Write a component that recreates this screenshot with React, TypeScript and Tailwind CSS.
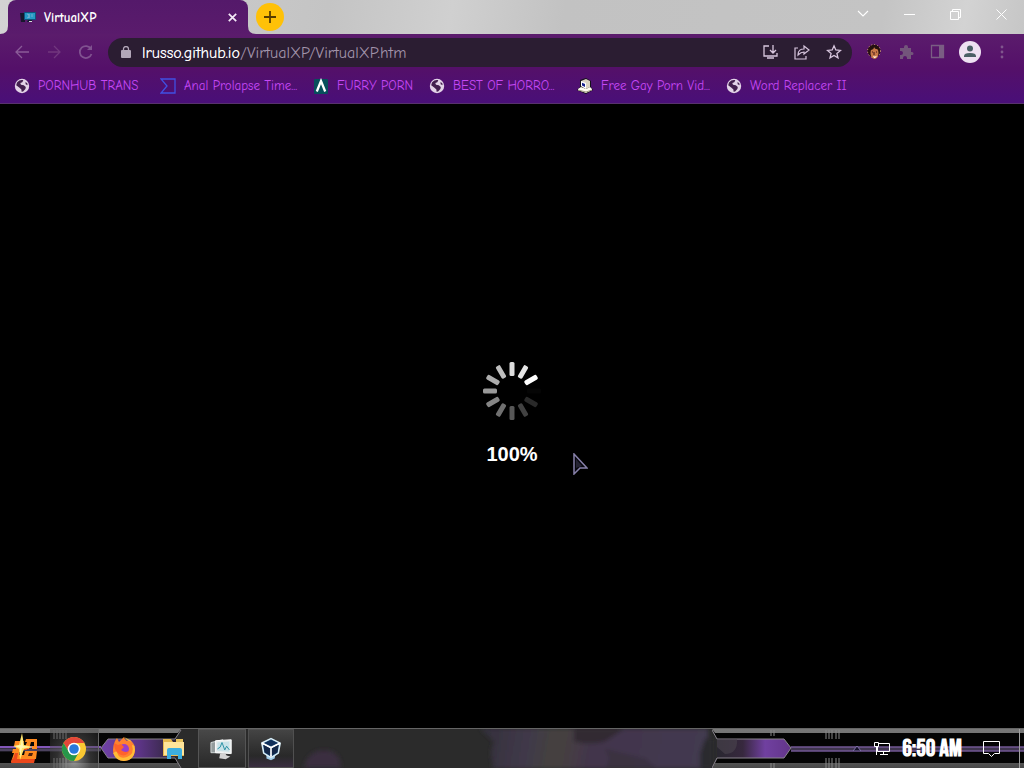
import React from "react";

const comic = "font-['Comic_Sans_MS','Comic_Neue','Open_Sans',sans-serif]";

function Globe() {
  return (
    <svg width="16" height="16" viewBox="0 0 16 16" aria-hidden="true">
      <circle cx="8" cy="8" r="7.2" fill="#e3d3e8" />
      <path d="M3 4.5c2-2.6 4.8-3 6.300-2.300L8.300 4.200l-2 .7.700 1.900 2.800.5 2 1.600-.4 2.200-2.300 2.400-1.500.2-.2-2.300L5.500 9.800 2.200 7.300zM11.500 4l1.800 1.300.3 2-2-1z" fill="#43204f" />
    </svg>
  );
}

function SigmaIcon() {
  return (
    <svg width="16" height="16" viewBox="0 0 16 16" fill="none" stroke="#4050e2" strokeWidth="1.3" aria-hidden="true">
      <path d="M1 1h14v14H1l6-7z" />
    </svg>
  );
}

function PeakIcon() {
  return (
    <svg width="16" height="16" viewBox="0 0 16 16" aria-hidden="true">
      <rect x="1" y="1" width="14" height="15" rx="1" fill="#074f5c" />
      <path d="M3.800 13.500 8 3l4.200 10.500" fill="none" stroke="#fff" strokeWidth="2.300" />
    </svg>
  );
}

function RetroComputer() {
  return (
    <svg width="16" height="16" viewBox="0 0 16 16" aria-hidden="true">
      <path d="m3 2 6-2 5 3v6l2 3-7 4-9-4 3-3z" fill="#15111a" />
      <path d="m4 3 5-2 4 2v6l-4 2-5-3z" fill="#d9d2c0" />
      <path d="m4 3 5 2v6L4 8z" fill="#fff" />
      <path d="m5 4.700 3 1.300v3L5 7.500z" fill="#16208c" />
      <path d="m1 11 3-2 5 2 4-2 2 2v1l-6 3-8-3z" fill="#fffdf0" />
      <path d="m1 12 8 2 6-2" fill="none" stroke="#a19a83" />
    </svg>
  );
}

function MonitorFavicon() {
  return (
    <svg width="16" height="12" viewBox="0 0 16 12" aria-hidden="true">
      <path d="M0 2h5v9H1z" fill="#17172d" />
      <path d="M4 1h12v8H4z" fill="#10547c" />
      <path d="M5 2h10v6H5z" fill="#2599c5" />
      <path d="m7 3 3 1-2 1 2 1-3 1M12 3v3" fill="none" stroke="#70b0cd" />
      <path d="M8 9h4v2H7z" fill="#111b32" /><path d="M9 10h3v1H9z" fill="#ddd" />
    </svg>
  );
}

const bookmarks = [
  { label: "PORNHUB TRANS", icon: <Globe />, width: "w-[146px]" },
  { label: "Anal Prolapse Time...", icon: <SigmaIcon />, width: "w-[153px]" },
  { label: "FURRY PORN", icon: <PeakIcon />, width: "w-[116px]" },
  { label: "BEST OF HORRO...", icon: <Globe />, width: "w-[148px]" },
  { label: "Free Gay Porn Vid...", icon: <RetroComputer />, width: "w-[149px]" },
  { label: "Word Replacer II", icon: <Globe />, width: "w-[140px]" },
];

function TitleBar() {
  return (
    <header className="flex h-[34px] bg-[linear-gradient(100deg,#d3d3d3_0%,#c4c4c4_32%,#d0d0d0_44%,#c2c2c2_55%,#c4c4c4_86%,#d3d3d3_94%,#c6c6c6_100%)]">
      <div className="flex w-64 shrink-0 items-end">
        <svg className="shrink-0" width="8" height="8" viewBox="0 0 8 8" aria-hidden="true"><path d="M8 0q0 8-8 8h8z" fill="#591b6b" /></svg>
        <div className="flex h-full min-w-0 flex-1 items-center rounded-t-lg bg-[linear-gradient(#54196a,#5a1b6c)] pr-2 pl-3">
          <MonitorFavicon />
          <h1 className={`ml-2 flex-1 pt-[2px] text-[13px] font-bold text-white ${comic}`}>VirtualXP</h1>
          <button aria-label="Close tab" className="grid size-4 place-items-center">
            <svg width="9" height="9" viewBox="0 0 9 9" stroke="#f4eaf7" strokeWidth="1.700"><path d="m.8.8 7.400 7.400M8.200.8.8 8.200" /></svg>
          </button>
        </div>
        <svg className="shrink-0" width="8" height="8" viewBox="0 0 8 8" aria-hidden="true"><path d="M0 0q0 8 8 8H0z" fill="#591b6b" /></svg>
      </div>
      <button aria-label="New tab" className="mt-[3px] grid size-7 place-items-center rounded-full bg-[#ffc107]">
        <svg width="14" height="14" viewBox="0 0 14 14" stroke="#573c00" strokeWidth="1.800"><path d="M7 1v12M1 7h12" /></svg>
      </button>
      <div className="ml-auto flex h-7 text-white">
        <button aria-label="Search tabs" className="grid w-[46px] place-items-center"><svg width="12" height="8" viewBox="0 0 12 8" fill="none" stroke="currentColor" strokeWidth="1.100"><path d="m1 1 5 5 5-5" /></svg></button>
        <button aria-label="Minimize" className="grid w-[46px] place-items-center"><svg width="11" height="3" stroke="currentColor"><path d="M0 1.500h11" /></svg></button>
        <button aria-label="Restore" className="grid w-[46px] place-items-center"><svg width="11" height="11" viewBox="0 0 11 11" fill="none" stroke="currentColor"><path d="M.5 2.500h8v8h-8zM2.500 2V.5h8v8H9" /></svg></button>
        <button aria-label="Close" className="grid w-[46px] place-items-center"><svg width="11" height="11" viewBox="0 0 11 11" stroke="currentColor"><path d="m.5.5 10 10m0-10-10 10" /></svg></button>
      </div>
    </header>
  );
}

function NavIcon({ name, children }: { name: string; children: React.ReactNode }) {
  return <button aria-label={name} className="grid size-8 shrink-0 place-items-center">{children}</button>;
}

function Toolbar() {
  const icon = { width: 16, height: 16, viewBox: "0 0 16 16", fill: "none", strokeWidth: 1.3 };
  return (
    <div className="flex h-9 items-center pr-[6px] pl-[6px]">
      <NavIcon name="Back"><svg {...icon} stroke="#8a5b98"><path d="M15 8H2m6-6L2 8l6 6" /></svg></NavIcon>
      <NavIcon name="Forward"><svg {...icon} stroke="#71377e"><path d="M2 8h12M8 2l6 6-6 6" /></svg></NavIcon>
      <NavIcon name="Reload"><svg {...icon} stroke="#805290" strokeWidth={1.8}><path d="M13 5a6 6 0 1 0 .5 5" /><path d="M14 1v5H9z" fill="#805290" stroke="none" /></svg></NavIcon>
      <div className="ml-[6px] flex h-[29px] min-w-0 flex-1 items-center rounded-full bg-[#2b1d32] pr-[2px] pl-[13px]">
        <svg width="10" height="13" viewBox="0 0 10 13" aria-hidden="true"><rect y="4" width="10" height="8" rx="1" fill="#b3a7b9" /><path d="M2.500 5V3a2.500 2.500 0 0 1 5 0v2" fill="none" stroke="#b3a7b9" strokeWidth="1.300" /></svg>
        <div className="relative ml-[11px] min-w-0 flex-1 pt-[2px]">
          <input aria-label="Address" className={`block h-6 w-full bg-transparent p-0 text-base leading-6 text-[#a294ab] outline-none ${comic}`} defaultValue="lrusso.github.io/VirtualXP/VirtualXP.htm" />
          <span aria-hidden="true" className={`pointer-events-none absolute top-[2px] left-0 text-base leading-6 text-white ${comic}`}>lrusso.github.io</span>
        </div>
        <NavIcon name="Install"><svg {...icon} stroke="#d8c6de"><path d="M7 2H2v10h13v-3M5 14h7M11 1v7M8 6l3 3 3-3" /></svg></NavIcon>
        <NavIcon name="Share"><svg {...icon} stroke="#d8c6de" strokeWidth={1.2}><path d="M4 4H1v11h11v-3M4 11c0-5 3-6 6-6V2l5 4-5 4V8c-3 0-4 1-6 3z" /></svg></NavIcon>
        <NavIcon name="Bookmark"><svg {...icon} stroke="#d8c6de"><path d="m8 1.800 1.800 4.200 4.700.4-3.600 3 1.100 4.500L8 11.500l-4 2.400 1.100-4.500-3.600-3L6.200 6z" /></svg></NavIcon>
      </div>
      <div className="ml-[6px] flex">
        <NavIcon name="Profile extension">
          <svg width="16" height="16" viewBox="0 0 16 16"><circle cx="8" cy="7" r="6.500" fill="#291211" stroke="#d99d80" strokeDasharray="1 2" /><ellipse cx="8.500" cy="9" rx="4" ry="6" fill="#c87948" /><path d="M4 6q4 0 4-3 1 3 5 2l-1-3-6-1z" fill="#24110f" /><path d="M6 8h1m3 0h1M8 8v3" stroke="#421719" /><path d="M7 12q2 1 4-.5-1 3-3 2.500z" fill="#fff2e0" /></svg>
        </NavIcon>
        <NavIcon name="Extensions"><svg width="16" height="16" viewBox="0 0 16 16" fill="#73557b"><path d="M2 4h4V3a2 2 0 0 1 4 0v1h3v4h1a1.500 1.500 0 0 1 0 3h-1v4H9v-1a2 2 0 0 0-4 0v1H2v-4h1a2 2 0 0 0 0-4H2z" /></svg></NavIcon>
        <NavIcon name="Side panel"><svg {...icon} stroke="#7a5d83"><path d="M1.500 1.500h12v12h-12z" /><path d="M9 2h5v12H9z" fill="#7a5d83" stroke="none" /></svg></NavIcon>
        <NavIcon name="Profile"><svg width="22" height="22" viewBox="0 0 22 22"><circle cx="11" cy="11" r="11" fill="#eee1f2" /><circle cx="11" cy="7.500" r="3" fill="#4b6066" /><path d="M5 16v-1q0-3 6-3t6 3v1z" fill="#4b6066" /></svg></NavIcon>
        <NavIcon name="Browser menu"><svg width="4" height="14" viewBox="0 0 4 14" fill="#80568d"><circle cx="2" cy="2" r="1.400" /><circle cx="2" cy="7" r="1.400" /><circle cx="2" cy="12" r="1.400" /></svg></NavIcon>
      </div>
    </div>
  );
}

function Spinner() {
  const colors = ["#ddd", "#e5e5e5", "#fff", "#050505", "#292929", "#424242", "#575757", "#707070", "#858585", "#999", "#adadad", "#bebebe"];
  return (
    <svg width="58" height="58" viewBox="0 0 58 58" role="img" aria-label="Loading">
      {colors.map((color, i) => <rect key={i} x="26.500" y="0" width="5" height="14" rx="1.500" fill={color} transform={`rotate(${i * 30} 29 29)`} />)}
    </svg>
  );
}

function LeftFrame() {
  return (
    <svg className="absolute top-0 left-0" width="200" height="40" viewBox="0 0 200 40" aria-hidden="true">
      <defs>
        <linearGradient id="edge" x2="0" y2="1"><stop stopColor="#777" /><stop offset=".6" stopColor="#6a6a6a" /><stop offset="1" stopColor="#454545" /></linearGradient>
        <linearGradient id="violet"><stop stopColor="#7042a7" /><stop offset=".5" stopColor="#5c3485" /><stop offset="1" stopColor="#292530" /></linearGradient>
      </defs>
      <path d="M0 0h181l-6 10v19l6 11H0z" fill="#050505" />
      <path d="m181 0-6 10 4 9-4 10 6 11h19V0z" fill="#2b2b2b" />
      <path d="M0 0h181l-3 4H0zM0 34h178l3 6H0z" fill="url(#edge)" />
      <path d="M54 1v9m3-9v9m3-9v9m3-9v9m3-9v9M54 29v10m3-10v10m3-10v10m3-10v10m3-10v10" stroke="#888" />
      <path d="M0 20h101" stroke="#373044" strokeWidth="5" /><path d="M0 18h101" stroke="#8256b8" strokeWidth="2" /><path d="M0 21h101" stroke="#605478" />
      <path d="m101 19 7-9h67l4 9-4 10h-67z" fill="url(#violet)" />
      <path d="m181 1-6 9h-67l-7 9 7 10h67l6 10" fill="none" stroke="#858087" />
    </svg>
  );
}

function RightFrame() {
  return (
    <svg className="absolute top-0 right-0" width="312" height="40" viewBox="0 0 312 40" aria-hidden="true">
      <defs><linearGradient id="violet-right"><stop stopColor="#292730" /><stop offset=".35" stopColor="#37283e" /><stop offset=".65" stopColor="#7040a0" /><stop offset="1" stopColor="#63358a" /></linearGradient></defs>
      <path d="m0 0 5 10v20L0 40h312V0z" fill="#040404" />
      <path d="M0 0h312v4H3zM3 34h309v6H0z" fill="url(#edge)" />
      <path d="M79 20h233" stroke="#40364f" strokeWidth="5" /><path d="M79 18h233M79 22h233" stroke="#8a68b7" />
      <path d="M5 10h67l7 9-7 10H5z" fill="url(#violet-right)" />
      <path d="m0 1 5 9h67l7 9-7 10H5l-5 10" fill="none" stroke="#8b858e" />
      <path d="M5 10h20q1 15-12 15l-8-7z" fill="#4b454e" opacity=".6" />
      <path d="M114 1v9m3-9v9m3-9v9m4-9v9m3-9v9M114 29v10m3-10v10m3-10v10m4-10v10m3-10v10M59 1v6m3-6v6M59 34v5m3-5v5" stroke="#888" />
      <path d="M307.500 0v40" stroke="#a0a0a0" />
    </svg>
  );
}

function Chrome() {
  return <svg width="24" height="24" viewBox="0 0 24 24"><circle cx="12" cy="12" r="12" fill="#fac832" /><path d="M1.600 6A12 12 0 0 1 22.400 6H12a6 6 0 0 0-5 9z" fill="#e3473a" /><path d="M1.600 6A12 12 0 0 0 12 24l5-9a6 6 0 0 1-10 0z" fill="#27964a" /><circle cx="12" cy="12" r="6.300" fill="#fff" /><circle cx="12" cy="12" r="4.800" fill="#2879dc" /></svg>;
}
function Firefox() {
  return <svg width="24" height="24" viewBox="0 0 24 24"><path d="M3 4 5 1l2 4q3-3 5-5 1 4 4 4l2-1q5 4 5 10a11 11 0 0 1-22 0Q1 8 3 4" fill="#ff812f" /><path d="m12 0 4 4q5-1 7 6-1-2-3-2 3 9-5 12Q6 23 5 14l-4 2q3 8 11 8 10 0 11-11Q23 7 18 3z" fill="#ffd13b" opacity=".75" /><circle cx="12" cy="12" r="5" fill="#993ec9" /><path d="m2 6 4 2 3-1 3 3-3 3q5 4 9 0-3 7-9 5Q2 15 2 6" fill="#ff622c" /></svg>;
}
function Folder() {
  return <svg width="24" height="24" viewBox="0 0 24 24"><path d="M1 2h8l2 3h11v14H1z" fill="#e5b94f" /><path d="M2 5h20v13H2z" fill="#ffe59a" /><path d="M14 2h7v3h-7z" fill="#e9c35d" /><path d="M5 22v-9q0-2 2-2h11q2 0 2 2v9h-4v-4H9v4z" fill="#3caee0" /></svg>;
}
function MonitorApp() {
  return <svg width="24" height="24" viewBox="0 0 26 26"><path d="m1 6 13-3v14H1z" fill="#949c9d" stroke="#d7dddd" /><path d="m6 4 17-1v15L6 17z" fill="#e8eeee" stroke="#fff" /><path d="m8 6 13-1v11L8 15z" fill="#c8e2e8" /><path d="m8 13 3-2 2-5 3 8 2-4 3 4" fill="none" stroke="#248da1" /><path d="m11 18 5-1 2 3 4 1-5 3-7-1z" fill="#d3d3d3" /></svg>;
}
function VirtualBox() {
  return <svg width="20" height="24" viewBox="0 0 22 25"><path d="m6 18 5-2 5 2-1 5-4 2-5-2z" fill="#9fcae7" /><path d="m1 6 10-5 10 5-2 11-8 5-8-5z" fill="#153e68" stroke="#d8edf7" strokeWidth="1.800" /><path d="m1 6 10 5 10-5M11 11v10" stroke="#fff" strokeWidth="2" fill="none" /><path d="m4 6 7-3 7 3-7 3z" fill="#102f5a" /><path d="m3 8 7 4v7l-6-3zM19 8l-7 4v7l6-3z" fill="#142747" /></svg>;
}
function StartLogo() {
  return (
    <svg width="28" height="32" viewBox="0 0 28 32">
      <path d="M4 8h9l-1 4H8v4h4l-1 3H8v3h15l-1 7H0l3-9H1l1-4h3v-3H3z" fill="#ff8a1f" />
      <path d="M15 6h11v10h-5v-3h2V9h-3l-2 7h-5l3-7h-2zM14 18h12l-1 8H12z" fill="#ff8a1f" />
      <path d="m18 20-1 3h4l1-3z" fill="#51220b" />
      <path d="M1 26h23l-1 4H0zM13 14h4l-1 3h-4zM4 20h3l-1 6H2z" fill="#ec481c" />
      <path d="m11 0 2 12 9 2-9 2-4 11-1-11-6-3 6-1z" fill="#ffe46a" />
      <path d="m11 4 1 9 6 1-7 1-2 8v-8l-5-2 6-1z" fill="#fff8b2" />
    </svg>
  );
}

function Taskbar() {
  return (
    <footer className="relative h-10 shrink-0 overflow-hidden border-t border-[#656565] bg-[#2b2b2b]">
      <svg className="absolute inset-0 size-full" viewBox="0 0 1024 40" preserveAspectRatio="xMidYMid slice" aria-hidden="true">
        <defs>
          <linearGradient id="haze" gradientUnits="userSpaceOnUse" x1="480" x2="715" y1="10" y2="50"><stop stopColor="#34303c" /><stop offset=".2" stopColor="#403949" /><stop offset=".32" stopColor="#45423e" /><stop offset=".48" stopColor="#43344c" /><stop offset="1" stopColor="#433b51" /></linearGradient>
          <filter id="mist"><feGaussianBlur stdDeviation="2" /></filter>
        </defs>
        <g filter="url(#mist)">
          <path d="m480 0 8 7 6 6-3 10 2 17h215V0z" fill="url(#haze)" /><path d="M574 0v13q17 4 31 0l20-13z" fill="#302b33" /><path d="m604 20 5 9-3 11h50l-10-10z" fill="#352f3b" opacity=".6" /><path d="M304 39q4-17 20-17t17 17z" fill="#3a2e41" /><path d="m700 25 5-15h9v30h-14z" fill="#29292d" />
        </g>
      </svg>
      <LeftFrame /><RightFrame />
      <div className="relative flex h-full items-center justify-between">
        <nav aria-label="Taskbar applications" className="flex h-full items-center">
          <button aria-label="Start" className="grid h-full w-[50px] place-items-center"><StartLogo /></button>
          <button aria-label="Google Chrome" className="grid h-full w-[49px] place-items-center border-r border-[#686868] bg-[radial-gradient(ellipse_at_50%_80%,#bbba,#5558_50%,#3335)]"><Chrome /></button>
          <button aria-label="Firefox" className="grid h-full w-[50px] place-items-center"><Firefox /></button>
          <button aria-label="File Explorer" className="grid h-full w-[49px] place-items-center"><Folder /></button>
          <button aria-label="System monitor" className="grid h-full w-12 place-items-center border border-[#555] bg-[linear-gradient(#484848,#292929)]"><MonitorApp /></button>
          <button aria-label="VirtualBox" className="ml-[2px] grid h-full w-[46px] place-items-center border border-[#505050] bg-[linear-gradient(#444,#292929_70%,#392d40)]"><VirtualBox /></button>
        </nav>
        <div className="flex h-full items-center pr-[23px]">
          <button aria-label="Show hidden icons" className="grid w-6 place-items-center"><svg width="8" height="5" viewBox="0 0 8 5"><path d="m0 5 4-5 4 5z" fill="#151128" stroke="#8173ab" /></svg></button>
          <button aria-label="Network" className="grid w-[26px] place-items-center"><svg width="17" height="14" viewBox="0 0 17 14" fill="none" stroke="#fff"><path d="M3.500 4.500v5h12v-8h-11M.500.500h4v4h-4zM2.500 5v8M9.500 10v3M6 12.500h8" /></svg></button>
          <time className="ml-1 w-[66px] text-center font-['Bebas_Neue','Liberation_Sans_Narrow','Roboto_Condensed',sans-serif] text-2xl leading-6 font-bold whitespace-nowrap text-white">6:50 AM</time>
          <button aria-label="Notifications" className="ml-4 grid w-5 place-items-center"><svg width="17" height="16" viewBox="0 0 17 16" fill="none" stroke="#fff"><path d="M.5.5h16v12h-5l-3 3-3-3h-5z" /></svg></button>
        </div>
      </div>
    </footer>
  );
}

export default function App() {
  return (
    <div className="flex min-h-screen flex-col overflow-x-hidden bg-black">
      <TitleBar />
      <div className="border-b border-[#57316d] bg-[linear-gradient(#5b1c6c,#541069_50%,#490f78)]">
        <Toolbar />
        <nav aria-label="Bookmarks" className="flex h-[33px] items-center pb-[2px] pl-[14px]">
          {bookmarks.map(({ label, icon, width }) => (
            <a key={label} href="#" className={`flex shrink-0 items-center gap-2 text-[13px] leading-5 whitespace-nowrap text-[#c648f6] ${comic} ${width}`}>
              {icon}<span>{label}</span>
            </a>
          ))}
        </nav>
      </div>
      <main className="relative flex flex-1 flex-col items-center justify-center bg-black">
        <Spinner />
        <p className="mt-5 mb-[2px] font-['Liberation_Sans',sans-serif] text-xl leading-7 font-bold text-white">100%</p>
        <svg className="absolute top-[56%] left-[56%]" width="15" height="22" viewBox="0 0 15 22" aria-hidden="true"><path d="M1 1 14 15 7 15 1 21z" fill="#07060d" stroke="#8780a9" strokeWidth="1.500" /><path d="m3 6 6 7-6 2z" fill="#252333" /></svg>
      </main>
      <Taskbar />
    </div>
  );
}
